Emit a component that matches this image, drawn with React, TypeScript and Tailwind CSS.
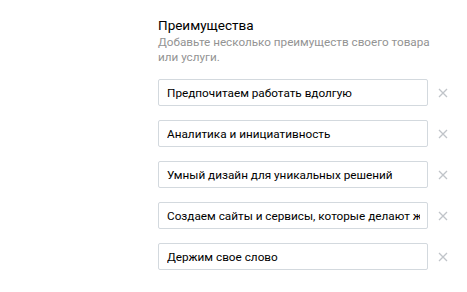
const ITEMS = [
  'Предпочитаем работать вдолгую',
  'Аналитика и инициативность',
  'Умный дизайн для уникальных решений',
  'Создаем сайты и сервисы, которые делают жизнь лучше',
  'Держим свое слово',
]

function CloseIcon() {
  return (
    <svg width="10" height="10" viewBox="0 0 10 10" className="text-[#c0c4c9]">
      <path d="M1 1 L9 9 M9 1 L1 9" stroke="currentColor" strokeWidth="1.3" />
    </svg>
  )
}

export default function App() {
  return (
    <div className="w-[467px] h-[292px] bg-white pl-[158px] pt-[16px] font-['Roboto',sans-serif]">
      <h2 className="text-[13.5px] leading-[18px] text-black">Преимущества</h2>
      <p className="mt-[1px] w-[275px] text-[11.7px] leading-[15px] text-[#939393]">
        Добавьте несколько преимуществ своего товара или услуги.
      </p>
      <div className="mt-[14px] flex flex-col gap-[14px]">
        {ITEMS.map((item) => (
          <div key={item} className="flex items-center">
            <input
              defaultValue={item}
              className="w-[270px] h-[27px] rounded-[2px] border border-[#d3d9de] pl-[8px] pr-[7px] text-[11.75px] text-black outline-none"
            />
            <button className="w-[28px] h-[27px] ml-[1px] flex items-center justify-center">
              <CloseIcon />
            </button>
          </div>
        ))}
      </div>
    </div>
  )
}
